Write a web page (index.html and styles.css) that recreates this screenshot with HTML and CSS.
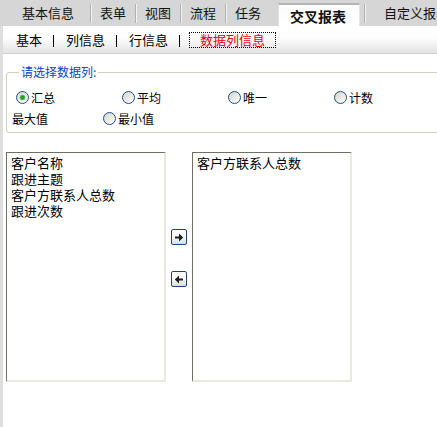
FILE: index.html
```html
<!DOCTYPE html>
<html lang="zh-CN">
<head>
<meta charset="utf-8">
<title>交叉报表</title>
<link rel="stylesheet" href="styles.css">
</head>
<body>
<div class="tabbar">
  <div class="tab first">基本信息</div>
  <div class="sep"></div>
  <div class="tab">表单</div>
  <div class="sep"></div>
  <div class="tab">视图</div>
  <div class="sep"></div>
  <div class="tab">流程</div>
  <div class="sep"></div>
  <div class="tab">任务</div>
  <div class="tab active">交叉报表</div>
  <div class="sep"></div>
  <div class="tab last">自定义报表</div>
</div>
<div class="main">
  <div class="subnav">
    <span class="link">基本</span>
    <span class="bar"></span>
    <span class="link">列信息</span>
    <span class="bar"></span>
    <span class="link">行信息</span>
    <span class="bar"></span>
    <span class="link current">数据列信息</span>
  </div>
  <fieldset class="group">
    <legend>请选择数据列:</legend>
    <div class="row grid4">
      <label class="opt"><input type="radio" name="agg" checked>汇总</label>
      <label class="opt"><input type="radio" name="agg">平均</label>
      <label class="opt"><input type="radio" name="agg">唯一</label>
      <label class="opt"><input type="radio" name="agg">计数</label>
    </div>
    <div class="row row2">
      <span class="plain">最大值</span>
      <label class="opt"><input type="radio" name="agg">最小值</label>
    </div>
  </fieldset>
  <div class="lists">
    <div class="listbox">
      <div class="item">客户名称</div>
      <div class="item">跟进主题</div>
      <div class="item">客户方联系人总数</div>
      <div class="item">跟进次数</div>
    </div>
    <div class="btns">
      <button class="arrow" type="button" aria-label="添加">
        <svg width="10" height="9" viewBox="0 0 10 9"><path d="M1 3.5h4V0.5L9.2 4.5 5 8.5V5.5H1z" fill="#1e1e1e"/></svg>
      </button>
      <button class="arrow" type="button" aria-label="移除">
        <svg width="10" height="9" viewBox="0 0 10 9"><path d="M9 3.5H5V0.5L0.8 4.5 5 8.5V5.5h4z" fill="#1e1e1e"/></svg>
      </button>
    </div>
    <div class="listbox">
      <div class="item">客户方联系人总数</div>
    </div>
  </div>
</div>
</body>
</html>
```

FILE: styles.css
```css
html, body {
  margin: 0;
  padding: 0;
  overflow: hidden;
  background: #fff;
}
body {
  width: 437px;
  height: 427px;
  font-family: "Noto Sans CJK SC", "Liberation Sans", sans-serif;
  color: #000;
}

/* top tabs */
.tabbar {
  display: flex;
  align-items: stretch;
  height: 26px;
  background: #d6d6d6;
  white-space: nowrap;
}
.tab {
  font-size: 13px;
  line-height: 26px;
  padding: 0 8px;
  color: #111;
}
.tab.first {
  padding-left: 22px;
  padding-right: 15px;
}
.tab.active {
  margin-left: 9px;
  margin-top: 3px;
  padding: 0 13px 0 11px;
  line-height: 22px;
  font-size: 14px;
  font-weight: bold;
  background: linear-gradient(#fbfbfb, #ffffff);
  border-top: 2px solid #b4b4b4;
  border-left: 1px solid #e4e4e4;
  border-right: 1px solid #e4e4e4;
  margin-right: 3px;
}
.tab.last {
  padding-left: 18px;
}
.sep {
  margin: 4px 0 3px 1px;
  border-left: 1px solid #b0b0b0;
  border-right: 1px solid #f2f2f2;
}

/* body area */
.main {
  border-left: 3px solid #dedede;
  height: 401px;
}
.subnav {
  display: flex;
  align-items: center;
  height: 27px;
  padding-left: 13px;
  background: linear-gradient(#ffffff 0%, #fdfdfd 45%, #e3e3e3 100%);
  border-bottom: 1px solid #cfcfcf;
  font-size: 13px;
  line-height: 16px;
}
.link {
  color: #000;
}
.bar {
  width: 1px;
  height: 12px;
  margin: 3px 11px 0 11px;
  background: #000;
}
.bar + .link {
  margin-left: 1px;
}
.bar + .link.current {
  margin-left: -2px;
}
.link.current {
  color: #e8000b;
  border: 1px dotted #000;
  padding: 0 10px;
  height: 14px;
  line-height: 14px;
  margin-top: 1px;
}

/* group box */
.group {
  margin: 11px 0 0 3px;
  width: 460px;
  padding: 8px 0 3px 5px;
  border: 1px solid #d0d0bf;
  border-radius: 3px;
  font-size: 12px;
  line-height: 14px;
  box-sizing: border-box;
}
.group legend {
  margin-left: 7px;
  padding: 0 2px;
  color: #0046d5;
  font-size: 12px;
  line-height: 14px;
}
.row {
  height: 21px;
  display: flex;
  align-items: center;
}
.grid4 {
  display: grid;
  grid-template-columns: 106px 106px 106px 106px;
  align-items: center;
}
.row2 .plain {
  width: 87px;
}
.opt {
  display: flex;
  align-items: center;
}
.opt input {
  appearance: none;
  -webkit-appearance: none;
  width: 13px;
  height: 13px;
  margin: 0 2px 0 4px;
  border: 1px solid #1c5180;
  border-radius: 50%;
  box-sizing: border-box;
  background: linear-gradient(135deg, #d4d4cc 0%, #ececE6 55%, #ffffff 100%);
}
.opt input:checked {
  background:
    radial-gradient(circle, #21a121 0 1.6px, #6fd06f 2.6px, rgba(255,255,255,0) 3.2px),
    linear-gradient(135deg, #d4d4cc 0%, #ececE6 55%, #ffffff 100%);
}

/* lists */
.lists {
  display: flex;
  margin: 19px 0 0 3px;
}
.listbox {
  width: 160px;
  height: 230px;
  box-sizing: border-box;
  border-style: solid;
  border-width: 1px 2px 2px 1px;
  border-color: #716f64 #ebe9df #ebe9df #716f64;
  padding: 2px 4px;
  font-size: 13px;
  line-height: 16px;
  background: #fff;
}
.btns {
  width: 26px;
  display: flex;
  flex-direction: column;
  align-items: flex-start;
  padding: 77px 0 0 5px;
  box-sizing: border-box;
  gap: 26px;
}
.arrow {
  width: 16px;
  height: 16px;
  padding: 0;
  margin: 0;
  border: 1px solid #24436f;
  border-radius: 2px;
  background: linear-gradient(#ffffff 0%, #f4f6f8 55%, #d5dde6 100%);
  display: flex;
  align-items: center;
  justify-content: center;
}
.arrow svg {
  display: block;
}
```
